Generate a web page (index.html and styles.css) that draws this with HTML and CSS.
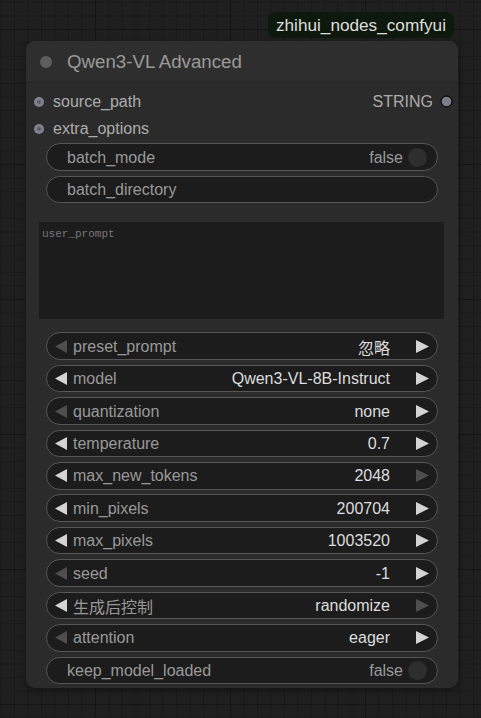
FILE: index.html
```html
<!DOCTYPE html>
<html lang="en">
<head>
<meta charset="utf-8">
<title>Qwen3-VL Advanced</title>
<link rel="stylesheet" href="styles.css">
</head>
<body>
<div class="canvas">
  <div class="stack">
    <div class="badge-row"><span class="badge">zhihui_nodes_comfyui</span></div>
    <div class="node">
      <div class="title">
        <span class="title-dot"></span>
        <span class="title-text">Qwen3-VL Advanced</span>
      </div>
      <div class="slots">
        <div class="slot-row">
          <svg class="in-dot" width="10" height="10" viewBox="0 0 10 10"><circle cx="5" cy="5" r="5" fill="#80808f"/><circle cx="5" cy="5" r="2" fill="#5c5c68"/></svg>
          <span class="slot-label">source_path</span>
          <span class="out-label">STRING</span>
          <svg class="out-dot" width="13" height="13" viewBox="0 0 13 13"><circle cx="6.5" cy="6.5" r="5.5" fill="#7c7c8c" stroke="#0c0c0c" stroke-width="1.3"/></svg>
        </div>
        <div class="slot-row">
          <svg class="in-dot" width="10" height="10" viewBox="0 0 10 10"><circle cx="5" cy="5" r="5" fill="#80808f"/><circle cx="5" cy="5" r="2" fill="#5c5c68"/></svg>
          <span class="slot-label">extra_options</span>
        </div>
      </div>
      <div class="widgets">
        <div class="widget toggle"><span class="w-label">batch_mode</span><span class="t-val">false</span><span class="knob"></span></div>
        <div class="widget text"><span class="w-label">batch_directory</span></div>
        <div class="textarea">user_prompt</div>

        <div class="widget combo">
          <svg class="arrow dim" width="12" height="13" viewBox="0 0 12 13"><polygon points="12,0 0,6.5 12,13"/></svg>
          <span class="c-label">preset_prompt</span><span class="c-val">忽略</span>
          <svg class="arrow" width="13" height="13" viewBox="0 0 13 13"><polygon points="0,0 13,6.5 0,13"/></svg>
        </div>
        <div class="widget combo">
          <svg class="arrow" width="12" height="13" viewBox="0 0 12 13"><polygon points="12,0 0,6.5 12,13"/></svg>
          <span class="c-label">model</span><span class="c-val">Qwen3-VL-8B-Instruct</span>
          <svg class="arrow" width="13" height="13" viewBox="0 0 13 13"><polygon points="0,0 13,6.5 0,13"/></svg>
        </div>
        <div class="widget combo">
          <svg class="arrow dim" width="12" height="13" viewBox="0 0 12 13"><polygon points="12,0 0,6.5 12,13"/></svg>
          <span class="c-label">quantization</span><span class="c-val">none</span>
          <svg class="arrow" width="13" height="13" viewBox="0 0 13 13"><polygon points="0,0 13,6.5 0,13"/></svg>
        </div>
        <div class="widget combo">
          <svg class="arrow" width="12" height="13" viewBox="0 0 12 13"><polygon points="12,0 0,6.5 12,13"/></svg>
          <span class="c-label">temperature</span><span class="c-val">0.7</span>
          <svg class="arrow" width="13" height="13" viewBox="0 0 13 13"><polygon points="0,0 13,6.5 0,13"/></svg>
        </div>
        <div class="widget combo">
          <svg class="arrow" width="12" height="13" viewBox="0 0 12 13"><polygon points="12,0 0,6.5 12,13"/></svg>
          <span class="c-label">max_new_tokens</span><span class="c-val">2048</span>
          <svg class="arrow dim" width="13" height="13" viewBox="0 0 13 13"><polygon points="0,0 13,6.5 0,13"/></svg>
        </div>
        <div class="widget combo">
          <svg class="arrow" width="12" height="13" viewBox="0 0 12 13"><polygon points="12,0 0,6.5 12,13"/></svg>
          <span class="c-label">min_pixels</span><span class="c-val">200704</span>
          <svg class="arrow" width="13" height="13" viewBox="0 0 13 13"><polygon points="0,0 13,6.5 0,13"/></svg>
        </div>
        <div class="widget combo">
          <svg class="arrow" width="12" height="13" viewBox="0 0 12 13"><polygon points="12,0 0,6.5 12,13"/></svg>
          <span class="c-label">max_pixels</span><span class="c-val">1003520</span>
          <svg class="arrow" width="13" height="13" viewBox="0 0 13 13"><polygon points="0,0 13,6.5 0,13"/></svg>
        </div>
        <div class="widget combo">
          <svg class="arrow dim" width="12" height="13" viewBox="0 0 12 13"><polygon points="12,0 0,6.5 12,13"/></svg>
          <span class="c-label">seed</span><span class="c-val">-1</span>
          <svg class="arrow" width="13" height="13" viewBox="0 0 13 13"><polygon points="0,0 13,6.5 0,13"/></svg>
        </div>
        <div class="widget combo">
          <svg class="arrow" width="12" height="13" viewBox="0 0 12 13"><polygon points="12,0 0,6.5 12,13"/></svg>
          <span class="c-label">生成后控制</span><span class="c-val">randomize</span>
          <svg class="arrow dim" width="13" height="13" viewBox="0 0 13 13"><polygon points="0,0 13,6.5 0,13"/></svg>
        </div>
        <div class="widget combo">
          <svg class="arrow dim" width="12" height="13" viewBox="0 0 12 13"><polygon points="12,0 0,6.5 12,13"/></svg>
          <span class="c-label">attention</span><span class="c-val">eager</span>
          <svg class="arrow" width="13" height="13" viewBox="0 0 13 13"><polygon points="0,0 13,6.5 0,13"/></svg>
        </div>
        <div class="widget toggle"><span class="w-label">keep_model_loaded</span><span class="t-val">false</span><span class="knob"></span></div>
      </div>
    </div>
  </div>
</div>
</body>
</html>
```
FILE: styles.css
```css
html, body {
  margin: 0;
  padding: 0;
}
body {
  width: 481px;
  height: 718px;
  overflow: hidden;
  background-color: #1f1f1f;
  background-image:
    linear-gradient(90deg, #151515 1px, transparent 1px),
    linear-gradient(#151515 1px, transparent 1px),
    linear-gradient(90deg, #191919 1px, transparent 1px),
    linear-gradient(#191919 1px, transparent 1px);
  background-size: 135px 135px, 135px 135px, 13.5px 13.5px, 13.5px 13.5px;
  background-position: 95px 0, 0 29px, 0.5px 0, 0 2px;
  font-family: "Liberation Sans", "Noto Sans CJK SC", sans-serif;
}
.canvas {
  padding: 12px 0 0 26px;
}
.stack {
  width: 432px;
}
.badge-row {
  display: flex;
  justify-content: flex-end;
  padding-right: 4px;
  margin-bottom: 3px;
}
.badge {
  height: 26px;
  line-height: 26px;
  padding: 0 8px;
  border-radius: 8px;
  background: #0e190e;
  color: #dedede;
  font-size: 17.2px;
}
.node {
  height: 647px;
  box-sizing: border-box;
  background: #2b2b2b;
  border-radius: 9px;
  box-shadow: 0 2px 6px rgba(0,0,0,0.35);
  overflow: hidden;
}
.title {
  height: 41px;
  box-sizing: border-box;
  display: flex;
  align-items: center;
  padding-left: 14px;
  padding-top: 1px;
  background: #2e2e2e;
  border-bottom: 1px solid #272727;
}
.title-dot {
  width: 12px;
  height: 12px;
  border-radius: 50%;
  background: #5e5e5e;
  margin-right: 15px;
}
.title-text {
  font-size: 18.7px;
  color: #9a9a9a;
}
.slots {
  padding-top: 6px;
}
.slot-row {
  height: 27px;
  display: flex;
  align-items: center;
  padding: 0 5px 0 8px;
  font-size: 16px;
  color: #ababab;
}
.in-dot {
  margin-right: 9px;
}
.slot-label {
  flex: 1;
}
.out-label {
  margin-right: 7px;
}
.widgets {
  display: flex;
  flex-direction: column;
  gap: 4.84px;
  padding: 1.3px 20px 0;
}
.widget {
  height: 27.6px;
  box-sizing: border-box;
  border: 1px solid #565656;
  border-radius: 14px;
  background: #1c1c1c;
  display: flex;
  align-items: center;
  font-size: 16px;
  color: #999;
  white-space: nowrap;
}
.widget.toggle, .widget.text {
  padding: 1px 10px 0 20px;
}
.w-label {
  flex: 1;
}
.t-val {
  margin-right: 5px;
}
.knob {
  width: 19px;
  height: 19px;
  border-radius: 50%;
  background: #2e2e2e;
  margin-top: -1px;
}
.widget.combo {
  padding: 1px 8px 0 8px;
}
.arrow {
  fill: #d4d4d4;
  flex: none;
  margin-top: -1px;
}
.arrow.dim {
  fill: #4e4e4e;
}
.c-label {
  margin-left: 6px;
  flex: 1;
}
.c-val {
  color: #dddddd;
  margin-right: 26px;
}
.textarea {
  margin: 13.9px -6px 8.5px -7px;
  height: 97px;
  box-sizing: border-box;
  background: #1c1c1c;
  padding: 6px 3px;
  font-family: "Liberation Mono", monospace;
  font-size: 11px;
  color: #777;
}
```
